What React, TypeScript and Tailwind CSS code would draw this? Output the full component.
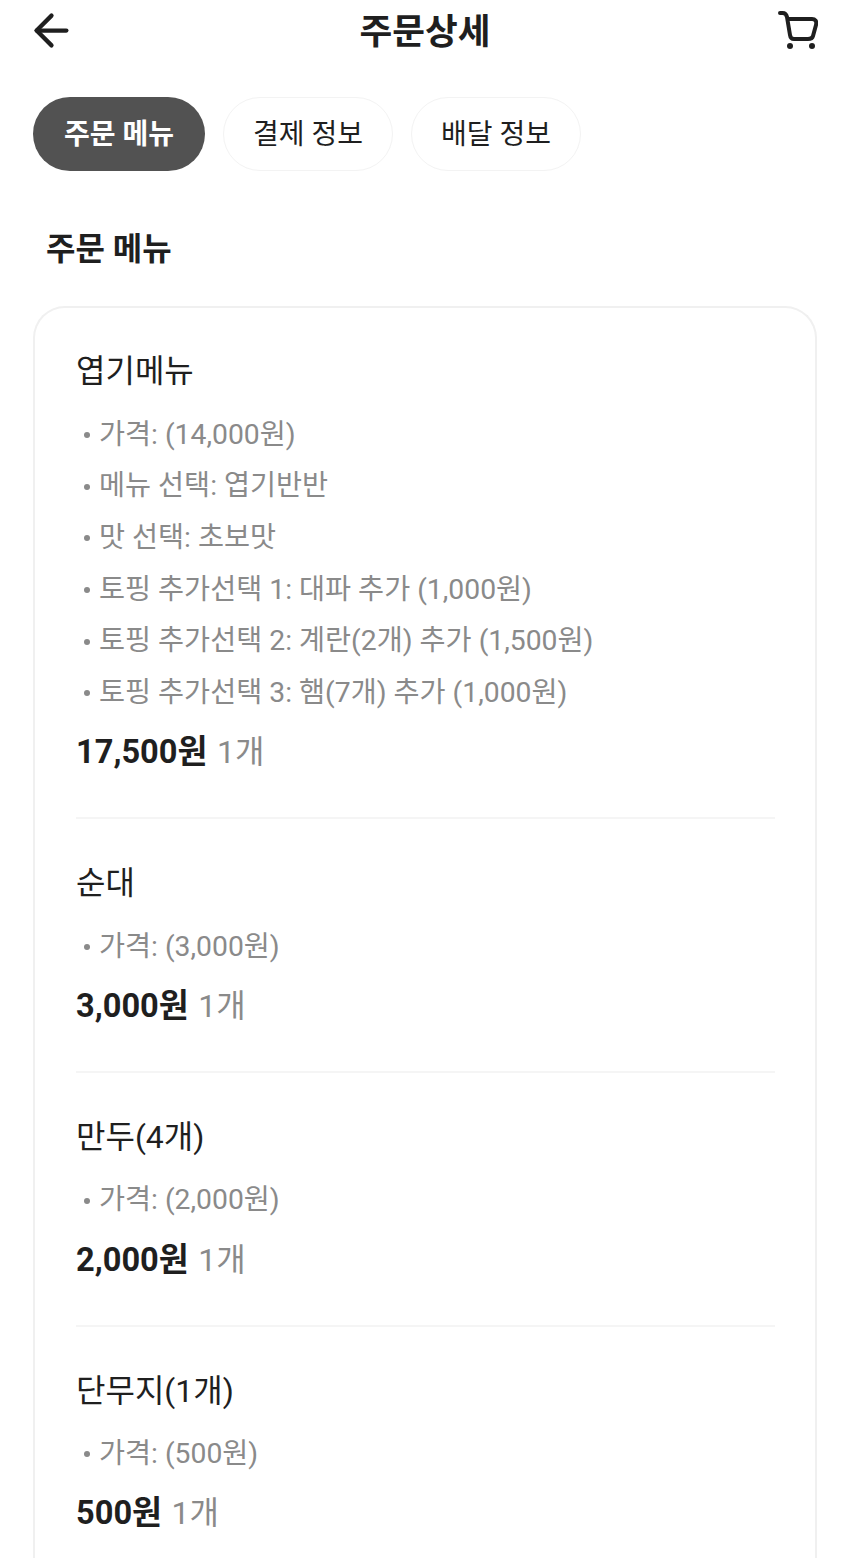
import { ArrowLeft } from 'lucide-react'

const items = [
  {
    name: '엽기메뉴',
    options: [
      '가격: (14,000원)',
      '메뉴 선택: 엽기반반',
      '맛 선택: 초보맛',
      '토핑 추가선택 1: 대파 추가 (1,000원)',
      '토핑 추가선택 2: 계란(2개) 추가 (1,500원)',
      '토핑 추가선택 3: 햄(7개) 추가 (1,000원)',
    ],
    price: '17,500원',
  },
  { name: '순대', options: ['가격: (3,000원)'], price: '3,000원' },
  { name: '만두(4개)', options: ['가격: (2,000원)'], price: '2,000원' },
  { name: '단무지(1개)', options: ['가격: (500원)'], price: '500원' },
]

const CartIcon = () => (
  <svg width="40" height="40" viewBox="0 0 40 40" fill="none" stroke="#1f1f1f" strokeWidth="4" strokeLinecap="round" strokeLinejoin="round">
    <path d="M2 2H4.5C7 2 8.5 3.5 9 6L12 24C12.4 27 13.5 28 16 28H30C33 28 34.5 27 35 25L38 14C39 10 37 8 34 8H9.5" />
    <circle cx="12" cy="35" r="3" fill="#1f1f1f" stroke="none" />
    <circle cx="34" cy="35" r="3" fill="#1f1f1f" stroke="none" />
  </svg>
)

const App = () => {
  return (
    <div className="h-[1558px] overflow-hidden bg-white text-[#1f1f1f] font-['Roboto','Noto_Sans_CJK_KR',sans-serif]">
      <header className="flex h-[62px] items-center justify-between pl-[26px] pr-[32px]">
        <ArrowLeft size={51} strokeWidth={2} className="-mt-[2px]" />
        <h1 className="mr-[5px] pt-[4px] text-[35.6px] font-bold leading-none">주문상세</h1>
        <CartIcon />
      </header>

      <div className="mt-[35px] flex gap-[18px] pl-[33px]">
        <div className="flex h-[74px] w-[172px] items-center justify-center rounded-full bg-[#525252] pt-[1px] text-[28px] font-bold text-white">주문 메뉴</div>
        <div className="flex h-[74px] w-[170px] items-center justify-center rounded-full border border-[#f3f3f3] pt-[1px] text-[28px]">결제 정보</div>
        <div className="flex h-[74px] w-[170px] items-center justify-center rounded-full border border-[#f3f3f3] pt-[1px] text-[28px]">배달 정보</div>
      </div>

      <h2 className="mt-[59px] pl-[46px] text-[32px] font-bold leading-[38px]">주문 메뉴</h2>

      <section className="mx-[33px] mt-[38px] rounded-t-[32px] border-2 border-b-0 border-[#f0f0f0] pb-[100px] pl-[41px] pr-[40px] pt-[41px]">
        {items.map((item, i) => (
          <div key={item.name} className={i > 0 ? 'mt-[43px] border-t-2 border-[#f5f5f5] pt-[42px]' : ''}>
            <div className="text-[32px] leading-[44px]">{item.name}</div>
            <ul className="mt-[16px]">
              {item.options.map((option) => (
                <li key={option} className="flex h-[51.7px] items-center pl-[8px] text-[28.3px] text-[#8a8a8a]">
                  <span className="mr-[9px] h-[6px] w-[6px] rounded-full bg-[#8a8a8a]" />
                  {option}
                </li>
              ))}
            </ul>
            <div className="mt-[11px] flex items-baseline gap-[9.5px] leading-[44px]">
              <span className="text-[32.6px] font-bold">{item.price}</span>
              <span className="text-[32px] text-[#8a8a8a]">1개</span>
            </div>
          </div>
        ))}
      </section>
    </div>
  )
}

export default App
